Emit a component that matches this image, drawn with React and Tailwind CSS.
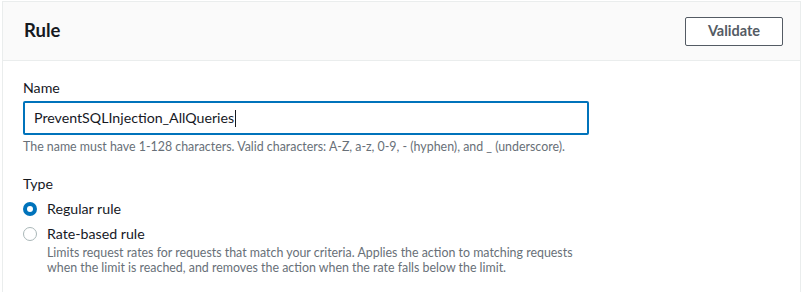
import React from "react";

const font = { fontFamily: "Lato, 'Open Sans', sans-serif" };

function Radio({ checked, label, description }) {
  return (
    <label className="flex items-start gap-[10px]">
      <span
        className={`mt-[4px] flex h-[14px] w-[14px] flex-shrink-0 items-center justify-center rounded-full ${
          checked ? "bg-[#0073bb]" : "border border-[#aab7b8] bg-white"
        }`}
      >
        {checked && <span className="h-[6px] w-[6px] rounded-full bg-white" />}
      </span>
      <span className="flex flex-col">
        <span className="text-[14.2px] leading-[22px] text-[#16191f]">{label}</span>
        {description && (
          <span className="text-[12.4px] leading-[15px] text-[#687078]">{description}</span>
        )}
      </span>
    </label>
  );
}

export default function App() {
  return (
    <div className="h-[292px] w-[804px] overflow-hidden bg-white" style={font}>
      <div className="ml-[2px] mr-[3px] mt-px h-full border-x border-t border-[#eaeded]">
        <div className="flex h-[59px] items-center justify-between border-b border-[#eaeded] bg-[#fafafa] pl-[21px] pr-[17px]">
          <h2 className="text-[18.5px] font-bold text-[#16191f]">Rule</h2>
          <button
            type="button"
            className="h-[29px] w-[98px] rounded-[2px] border border-[#545b64] bg-white text-[14.5px] font-bold text-[#545b64]"
          >
            Validate
          </button>
        </div>

        <div className="pl-[20px] pt-[16px]">
          <div className="text-[14.2px] leading-[22px] text-[#16191f]">Name</div>
          <div className="mt-[2px] flex h-[34px] w-[566px] items-center rounded-[2px] border-2 border-[#0073bb] px-[9px] text-[14.2px] text-[#16191f]">
            PreventSQLInjection_AllQueries
            <span className="ml-px h-[17px] w-px bg-[#16191f]" />
          </div>
          <p className="mt-[4px] text-[12.4px] leading-[15px] text-[#687078]">
            The name must have 1-128 characters. Valid characters: A-Z, a-z, 0-9, - (hyphen), and _ (underscore).
          </p>

          <div className="mt-[19px] text-[14.2px] leading-[22px] text-[#16191f]">Type</div>
          <div className="mt-[3px] flex flex-col gap-[3px]">
            <Radio checked label="Regular rule" />
            <Radio
              label="Rate-based rule"
              description={
                <>
                  Limits request rates for requests that match your criteria. Applies the action to matching requests
                  <br />
                  when the limit is reached, and removes the action when the rate falls below the limit.
                </>
              }
            />
          </div>
        </div>
      </div>
    </div>
  );
}
